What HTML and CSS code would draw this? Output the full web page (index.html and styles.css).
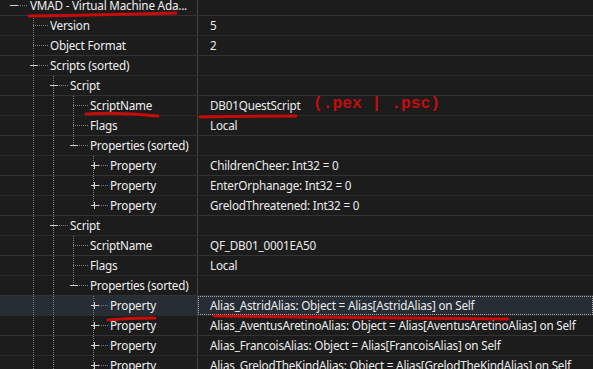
FILE: index.html
```html
<!DOCTYPE html>
<html lang="en">
<head>
  <meta charset="UTF-8">
  <title>VMAD - Record View</title>
  <link rel="stylesheet" href="styles.css">
</head>
<body>
  <div class="view">
    <div class="tree">
      <div class="row">
        <div class="name"><span class="e root minus"></span><span class="label">VMAD - Virtual Machine Ada...</span></div>
        <div class="val"></div>
      </div>
      <div class="row">
        <div class="name"><span class="g"></span><span class="e mid"></span><span class="label">Version</span></div>
        <div class="val">5</div>
      </div>
      <div class="row">
        <div class="name"><span class="g"></span><span class="e mid"></span><span class="label">Object Format</span></div>
        <div class="val">2</div>
      </div>
      <div class="row">
        <div class="name"><span class="g"></span><span class="e mid minus"></span><span class="label">Scripts (sorted)</span></div>
        <div class="val"></div>
      </div>

      <!-- primer script -->
      <div class="row">
        <div class="name"><span class="g"></span><span class="g v"></span><span class="e mid minus"></span><span class="label">Script</span></div>
        <div class="val"></div>
      </div>
      <div class="row">
        <div class="name"><span class="g"></span><span class="g v"></span><span class="g v"></span><span class="e mid"></span><span class="label">ScriptName</span></div>
        <div class="val">DB01QuestScript</div>
      </div>
      <div class="row">
        <div class="name"><span class="g"></span><span class="g v"></span><span class="g v"></span><span class="e mid"></span><span class="label">Flags</span></div>
        <div class="val">Local</div>
      </div>
      <div class="row">
        <div class="name"><span class="g"></span><span class="g v"></span><span class="g v"></span><span class="e last minus"></span><span class="label">Properties (sorted)</span></div>
        <div class="val"></div>
      </div>
      <div class="row">
        <div class="name"><span class="g"></span><span class="g v"></span><span class="g v"></span><span class="g"></span><span class="e mid plus"></span><span class="label">Property</span></div>
        <div class="val">ChildrenCheer: Int32 = 0</div>
      </div>
      <div class="row">
        <div class="name"><span class="g"></span><span class="g v"></span><span class="g v"></span><span class="g"></span><span class="e mid plus"></span><span class="label">Property</span></div>
        <div class="val">EnterOrphanage: Int32 = 0</div>
      </div>
      <div class="row">
        <div class="name"><span class="g"></span><span class="g v"></span><span class="g v"></span><span class="g"></span><span class="e last plus"></span><span class="label">Property</span></div>
        <div class="val">GrelodThreatened: Int32 = 0</div>
      </div>

      <!-- segundo script -->
      <div class="row">
        <div class="name"><span class="g"></span><span class="g v"></span><span class="e mid minus"></span><span class="label">Script</span></div>
        <div class="val"></div>
      </div>
      <div class="row">
        <div class="name"><span class="g"></span><span class="g v"></span><span class="g v"></span><span class="e mid"></span><span class="label">ScriptName</span></div>
        <div class="val">QF_DB01_0001EA50</div>
      </div>
      <div class="row">
        <div class="name"><span class="g"></span><span class="g v"></span><span class="g v"></span><span class="e mid"></span><span class="label">Flags</span></div>
        <div class="val">Local</div>
      </div>
      <div class="row">
        <div class="name"><span class="g"></span><span class="g v"></span><span class="g v"></span><span class="e last minus"></span><span class="label">Properties (sorted)</span></div>
        <div class="val"></div>
      </div>
      <div class="row sel">
        <div class="name"><span class="g"></span><span class="g v"></span><span class="g v"></span><span class="g"></span><span class="e mid plus"></span><span class="label">Property</span></div>
        <div class="val">Alias_AstridAlias: Object = Alias[AstridAlias] on Self</div>
      </div>
      <div class="row">
        <div class="name"><span class="g"></span><span class="g v"></span><span class="g v"></span><span class="g"></span><span class="e mid plus"></span><span class="label">Property</span></div>
        <div class="val">Alias_AventusAretinoAlias: Object = Alias[AventusAretinoAlias] on Self</div>
      </div>
      <div class="row">
        <div class="name"><span class="g"></span><span class="g v"></span><span class="g v"></span><span class="g"></span><span class="e mid plus"></span><span class="label">Property</span></div>
        <div class="val">Alias_FrancoisAlias: Object = Alias[FrancoisAlias] on Self</div>
      </div>
      <div class="row">
        <div class="name"><span class="g"></span><span class="g v"></span><span class="g v"></span><span class="g"></span><span class="e mid plus"></span><span class="label">Property</span></div>
        <div class="val">Alias_GrelodTheKindAlias: Object = Alias[GrelodTheKindAlias] on Self</div>
      </div>
    </div>

    <!-- anotaciones en rojo -->
    <svg class="marks" width="593" height="369" viewBox="0 0 593 369">
      <path d="M29,16 Q100,15 176,13" />
      <path d="M86,114 Q120,112 158,116" />
      <path d="M200,117 Q250,116 296,116" />
      <path d="M108,320 Q130,318 155,318" />
      <path d="M214,316 Q360,317 508,319" />
    </svg>
    <span class="note">(.pex | .psc)</span>
  </div>
</body>
</html>
```
FILE: styles.css
```css
/* Global */
body {
  margin: 0;
  background-color: #1c1c1c;
  color: #f0f0f0;
  font-family: 'Noto Sans', 'Open Sans', sans-serif;
  font-size: 11.7px;
  letter-spacing: -0.2px;
  overflow: hidden;
}

.view {
  position: relative;
  width: 593px;
  height: 369px;
  overflow: hidden;
}

.tree {
  margin-top: -4px;
}

/* Filas */
.row {
  display: grid;
  grid-template-columns: 198px 1fr;
  height: 20px;
  box-sizing: border-box;
  border-bottom: 1px solid #2a2a2a;
}

.row:nth-child(odd) {
  border-bottom-color: #333;
}

.name {
  display: flex;
  align-items: stretch;
  padding-left: 10px;
  border-right: 1px solid #424242;
  overflow: hidden;
  white-space: nowrap;
}

.label {
  line-height: 19px;
}

.val {
  padding-left: 12px;
  line-height: 19px;
  white-space: nowrap;
  overflow: hidden;
  color: #ececec;
}

.row.sel {
  background-color: #262d34;
}

.row.sel .val {
  outline: 1px dotted #a8a8a8;
  outline-offset: -1px;
}

/* Lineas del arbol */
.g, .e {
  flex: none;
  width: 20px;
  background-repeat: no-repeat;
}

.g.v {
  background-image: repeating-linear-gradient(to bottom, #7a7a7a 0 1px, transparent 1px 2px);
  background-size: 1px 100%;
  background-position: 3px 0;
}

.e {
  --dot-v: repeating-linear-gradient(to bottom, #7a7a7a 0 1px, transparent 1px 2px);
  --dot-h: repeating-linear-gradient(to right, #7a7a7a 0 1px, transparent 1px 2px);
}

.e.mid {
  background-image: var(--dot-v), var(--dot-h);
  background-size: 1px 100%, 15px 1px;
  background-position: 3px 0, 3px 9px;
}

.e.last {
  background-image: var(--dot-v), var(--dot-h);
  background-size: 1px 10px, 15px 1px;
  background-position: 3px 0, 3px 9px;
}

.e.root {
  background-image: var(--dot-h);
  background-size: 18px 1px;
  background-position: 0 9px;
}

/* expandir / contraer */
.e.minus {
  background-image: linear-gradient(#cfcfcf, #cfcfcf), var(--dot-v), var(--dot-h);
  background-size: 8px 1px, 1px 10px, 15px 1px;
  background-position: 0 9px, 3px 0, 3px 9px;
}

.e.mid.minus {
  background-size: 8px 1px, 1px 100%, 15px 1px;
}

.e.root.minus {
  background-image: linear-gradient(#cfcfcf, #cfcfcf), var(--dot-h);
  background-size: 8px 1px, 18px 1px;
  background-position: 0 9px, 0 9px;
}

.e.plus {
  background-image: linear-gradient(#d6d6d6, #d6d6d6), linear-gradient(#d6d6d6, #d6d6d6), var(--dot-v), var(--dot-h);
  background-size: 8px 1px, 1px 7px, 1px 100%, 15px 1px;
  background-position: 1px 9px, 4px 6px, 3px 0, 3px 9px;
}

.e.last.plus {
  background-size: 8px 1px, 1px 7px, 1px 10px, 15px 1px;
}

/* Anotaciones */
.marks {
  position: absolute;
  left: 0;
  top: 0;
  pointer-events: none;
}

.marks path {
  fill: none;
  stroke: #c80a0a;
  stroke-width: 3;
  stroke-linecap: round;
}

.note {
  position: absolute;
  left: 313px;
  top: 94px;
  font-family: 'Liberation Mono', monospace;
  font-size: 16.3px;
  font-weight: bold;
  letter-spacing: 0;
  color: #c30d0d;
  white-space: nowrap;
}
```
